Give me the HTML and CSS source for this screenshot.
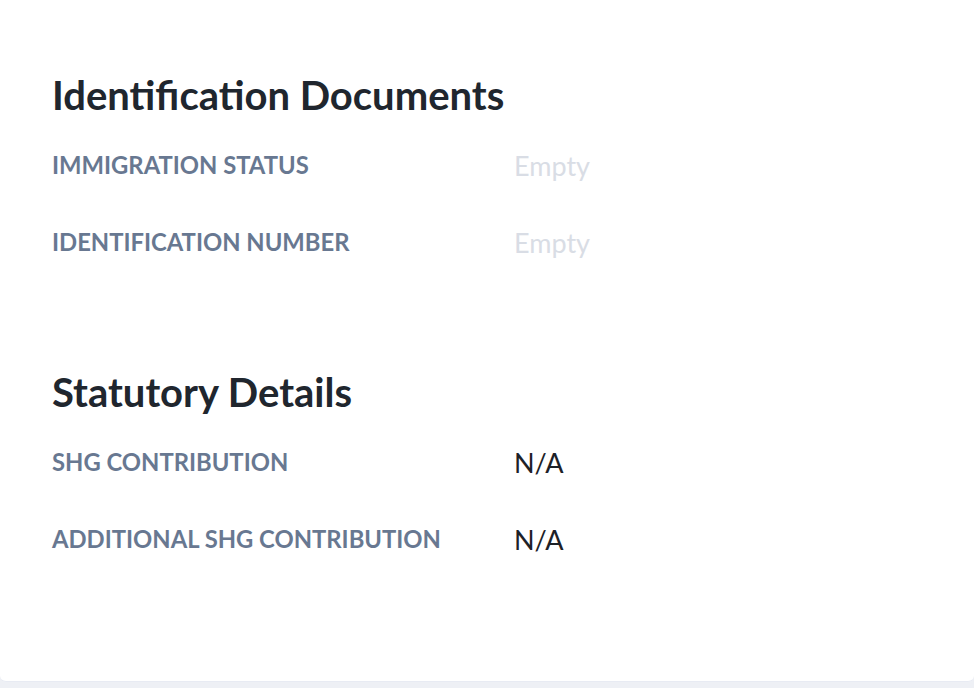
FILE: index.html
```html
<!DOCTYPE html>
<html>
<head>
<meta charset="utf-8">
<link rel="stylesheet" href="styles.css">
</head>
<body>
<div class="card">
  <section class="section">
    <h2 class="section-title">Identification Documents</h2>
    <div class="field first">
      <div class="label">IMMIGRATION STATUS</div>
      <div class="value empty">Empty</div>
    </div>
    <div class="field">
      <div class="label">IDENTIFICATION NUMBER</div>
      <div class="value empty">Empty</div>
    </div>
  </section>
  <section class="section second">
    <h2 class="section-title">Statutory Details</h2>
    <div class="field first">
      <div class="label">SHG CONTRIBUTION</div>
      <div class="value">N/A</div>
    </div>
    <div class="field">
      <div class="label">ADDITIONAL SHG CONTRIBUTION</div>
      <div class="value">N/A</div>
    </div>
  </section>
</div>
</body>
</html>
```
FILE: styles.css
```css
html, body {
  margin: 0;
  padding: 0;
}
body {
  background: #eef0f5;
  font-family: Lato, "Open Sans", sans-serif;
  height: 688px;
  overflow: hidden;
}
.card {
  background: #ffffff;
  height: 682px;
  box-sizing: border-box;
  border-radius: 0 0 6px 6px;
  border-bottom: 1px solid #e8ebf3;
  padding: 73px 0 0 52px;
}
.section {
  display: flex;
  flex-direction: column;
}
.section.second {
  margin-top: 116px;
}
.section-title {
  margin: 0;
  font-size: 40px;
  line-height: 44px;
  font-weight: 700;
  color: #20262e;
}
.field {
  display: grid;
  grid-template-columns: 462px 1fr;
  align-items: center;
  height: 28px;
  margin-top: 49px;
}
.field.first {
  margin-top: 32px;
}
.label {
  font-size: 23.8px;
  font-weight: 700;
  color: #687891;
  margin-top: -2px;
}
.value {
  font-size: 27px;
  color: #1d2127;
}
.value.empty {
  color: #d9dde5;
}
```
